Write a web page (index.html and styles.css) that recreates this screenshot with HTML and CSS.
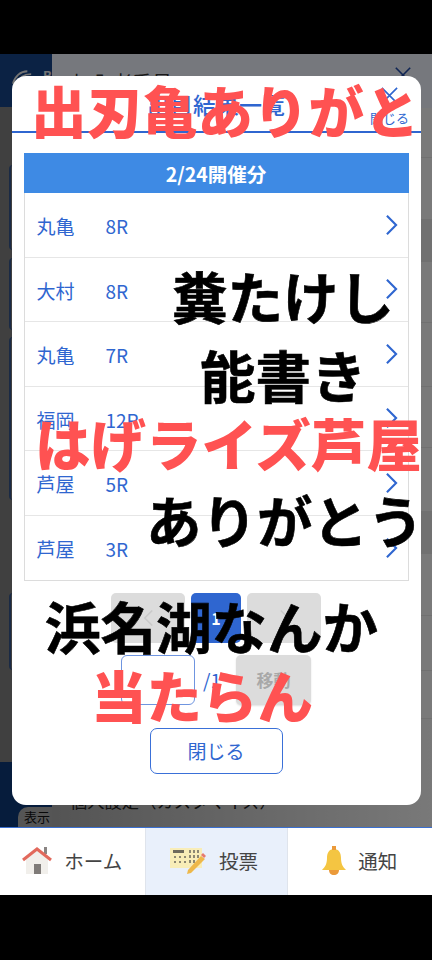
FILE: index.html
```html
<!DOCTYPE html>
<html lang="ja">
<head>
<meta charset="utf-8">
<title>出目結果一覧</title>
<link rel="stylesheet" href="styles.css">
</head>
<body>
<div class="screen">
  <div class="black-top"></div>
  <main class="app">
    <aside class="side">
      <div class="brand">
        <svg class="logo" viewBox="0 0 24 18"><path d="M1 16C3 8 9 3 16 3M5 17C7 10 12 6 20 6M9 18C11 12 16 9 23 9"/></svg>
        <span class="brand-name">B</span>
      </div>
      <div class="side-body">
        <span class="side-item i1"></span>
        <span class="side-item i2"></span>
        <span class="side-item i3"></span>
        <span class="side-item i4"></span>
      </div>
      <div class="side-navy"></div>
      <span class="show-tag">表示</span>
    </aside>
    <div class="content">
      <div class="member">加入者番号：05000412</div>
      <svg class="back-x" viewBox="0 0 20 20"><path d="M2 2 18 18M18 2 2 18"/></svg>
      <div class="row r50"></div>
      <div class="row r62"></div>
      <div class="row r42 dark"></div>
      <div class="row r61"></div>
      <div class="row r64"></div>
      <div class="row r61"></div>
      <div class="row r64"></div>
      <div class="row r42 dark"></div>
      <div class="row r62"></div>
      <div class="row r55"></div>
      <div class="row r48"></div>
      <div class="settings">個人設定（カスタマイズ）</div>
    </div>
    <div class="scrim"></div>
    <section class="modal">
      <header class="modal-head">
        <h1>出目結果一覧</h1>
        <div class="close-x">
          <svg viewBox="0 0 20 20"><path d="M2 2 18 18M18 2 2 18"/></svg>
          <span>閉じる</span>
        </div>
      </header>
      <div class="modal-body">
        <div class="date-bar">2/24開催分</div>
        <ul class="races">
          <li><span class="place">丸亀</span><span class="race">8R</span><svg viewBox="0 0 14 24"><path d="M2 2 12 12 2 22"/></svg></li>
          <li><span class="place">大村</span><span class="race">8R</span><svg viewBox="0 0 14 24"><path d="M2 2 12 12 2 22"/></svg></li>
          <li><span class="place">丸亀</span><span class="race">7R</span><svg viewBox="0 0 14 24"><path d="M2 2 12 12 2 22"/></svg></li>
          <li><span class="place">福岡</span><span class="race">12R</span><svg viewBox="0 0 14 24"><path d="M2 2 12 12 2 22"/></svg></li>
          <li><span class="place">芦屋</span><span class="race">5R</span><svg viewBox="0 0 14 24"><path d="M2 2 12 12 2 22"/></svg></li>
          <li><span class="place">芦屋</span><span class="race">3R</span><svg viewBox="0 0 14 24"><path d="M2 2 12 12 2 22"/></svg></li>
        </ul>
        <div class="pager">
          <span class="page-btn"><svg viewBox="0 0 14 24"><path d="M12 2 2 12 12 22"/></svg></span>
          <span class="page-cur">1</span>
          <span class="page-btn"><svg viewBox="0 0 14 24"><path d="M2 2 12 12 2 22"/></svg></span>
        </div>
        <div class="jump">
          <span class="jump-input"></span>
          <span class="jump-total">/1</span>
          <span class="jump-btn">移動</span>
        </div>
        <div class="close-wrap"><span class="close-btn">閉じる</span></div>
      </div>
    </section>
    <div class="caption c1 red">出刃亀ありがと</div>
    <div class="caption c2">糞たけし</div>
    <div class="caption c3">能書き</div>
    <div class="caption c4 red">はげライズ芦屋</div>
    <div class="caption c5">ありがとう</div>
    <div class="caption c6">浜名湖なんか</div>
    <div class="caption c7 red">当たらん</div>
  </main>
  <nav class="tabs">
    <div class="tab">
      <svg class="ic-home" viewBox="0 0 30 27"><path fill="#f1efeb" d="M4 12 15 3 26 12V27H4Z"/><path fill="#7f7b78" d="M12 17h7v10h-7z"/><path fill="#8a8583" d="M22 0h3v7h-3z"/><path class="roof" d="M1 13 15 2 29 13"/></svg>
      <span>ホーム</span>
    </div>
    <div class="tab active">
      <svg class="ic-vote" viewBox="0 0 37 27"><path fill="#f8edb8" d="M0 1h32v20H0z"/><path fill="#6e6a5c" d="M3 3h11v3H3z"/><path fill="#8d8873" d="M4 9h2v2H4zM9 9h2v2H9zM14 9h2v2h-2zM19 8h2v3h-2zM23 8h2v3h-2zM27 8h2v3h-2zM4 14h2v2H4zM9 14h2v2H9zM14 14h2v2h-2zM19 13h2v3h-2zM23 13h2v3h-2zM19 3h2v3h-2zM23 3h2v3h-2zM27 3h2v3h-2z"/><path fill="#eeb84a" d="M18 23 31 9l4 3-14 14-4 1z"/><path fill="#e77b6e" d="M33 6l3 3-2 2-3-3z"/></svg>
      <span>投票</span>
    </div>
    <div class="tab">
      <svg class="ic-bell" viewBox="0 0 24 29"><path fill="#f4c542" d="M12 3c5 0 7 4 7 9 0 6 2 9 5 12H0c3-3 5-6 5-12 0-5 2-9 7-9z"/><path fill="#eb9a3a" d="M10 0h4v4h-4zM7 24h10c0 3-2 5-5 5s-5-2-5-5z"/></svg>
      <span>通知</span>
    </div>
  </nav>
</div>
</body>
</html>
```
FILE: styles.css
```css
* { box-sizing: border-box; }
html, body { margin: 0; padding: 0; background: #000; }
body { font-family: "Noto Sans CJK JP", "Noto Sans", sans-serif; }
.screen { width: 432px; height: 960px; display: flex; flex-direction: column; background: #000; overflow: hidden; }
.black-top { height: 54px; flex: none; background: #000; }
.app { position: relative; height: 773px; flex: none; display: flex; background: #e9e9e9; overflow: hidden; }

.side { width: 52px; flex: none; display: flex; flex-direction: column; position: relative; background: #808080; }
.brand { height: 53px; flex: none; background: #164488; display: flex; align-items: flex-start; gap: 8px; padding: 14px 0 0 12px; overflow: hidden; }
.logo { width: 23px; height: 18px; flex: none; fill: none; stroke: #e8e8e8; stroke-width: 2; }
.brand-name { color: #e8e8e8; font-size: 13px; font-weight: 700; line-height: 16px; }
.side-body { flex: 1; display: flex; flex-direction: column; padding-top: 58px; }
.side-item { display: block; width: 12px; margin-left: 9px; border-left: 2px solid #34558a; border-radius: 4px 0 0 4px; }
.i1 { height: 85px; margin-bottom: 8px; }
.i2 { height: 72px; margin-bottom: 7px; }
.i3 { height: 163px; margin-bottom: 93px; }
.i4 { height: 77px; }
.side-navy { height: 65px; flex: none; background: #0c3878; }
.show-tag { position: absolute; left: 18px; bottom: 0; width: 34px; height: 20px; background: #aaa; padding-left: 6px; font-size: 13px; line-height: 20px; white-space: nowrap; border-radius: 10px 0 0 0; color: #111; overflow: hidden; }

.content { flex: 1; background: #fff; position: relative; display: flex; flex-direction: column; font-size: 20px; color: #333; }
.member { height: 54px; flex: none; background: #ecf0fa; padding: 14px 0 0 20px; line-height: 30px; white-space: nowrap; overflow: hidden; }
.back-x { position: absolute; right: 20px; top: 12px; width: 18px; height: 18px; fill: none; stroke: #1f4aa8; stroke-width: 1.8; }
.row { flex: none; background: #f5f5f5; border-bottom: 1px solid #e3e3e3; }
.row.dark { background: #e2e2e2; }
.r42 { height: 42px; }
.r48 { height: 48px; }
.r50 { height: 50px; }
.r55 { height: 55px; }
.r61 { height: 61px; }
.r62 { height: 62px; }
.r64 { height: 64px; }
.settings { flex: 1; display: flex; align-items: flex-end; padding: 0 0 13px 18px; font-size: 17.3px; line-height: 26px; background: linear-gradient(90deg, #a8a8a8, #f2f2f2); white-space: nowrap; color: #222; }
.scrim { position: absolute; inset: 0; background: rgba(0,0,0,.5); }

.modal { position: absolute; left: 11.5px; top: 22px; width: 409px; height: 729px; background: #fff; border-radius: 14px; display: flex; flex-direction: column; overflow: hidden; }
.modal-head { height: 57px; flex: none; border-bottom: 2px solid #2f66d0; display: flex; justify-content: center; align-items: center; position: relative; }
.modal-head h1 { margin: 0; font-size: 23px; line-height: 34px; font-weight: 500; color: #2f66d0; }
.close-x { position: absolute; right: 11px; top: 10px; width: 40px; display: flex; flex-direction: column; align-items: center; color: #2f66d0; font-size: 13px; line-height: 16px; }
.close-x svg { width: 19px; height: 19px; fill: none; stroke: #2f66d0; stroke-width: 1.7; margin-bottom: 5px; }
.modal-body { flex: 1; padding: 20px 12px 0; display: flex; flex-direction: column; }
.date-bar { height: 40px; flex: none; background: #3e8ae4; color: #fff; font-weight: 700; font-size: 19.5px; line-height: 42px; text-align: center; }
.races { list-style: none; margin: 0; padding: 0; flex: none; height: 388px; border: 1px solid #dcdcdc; border-top: none; }
.races li { height: 64.5px; display: flex; align-items: center; padding: 0 10px 0 12px; border-bottom: 1px solid #e6e6e6; color: #2f66d0; font-size: 19px; line-height: 24px; }
.races li:last-child { border-bottom: none; }
.place { width: 69px; padding-top: 3px; }
.race { flex: 1; padding-top: 3px; }
.races svg { width: 13px; height: 22px; fill: none; stroke: #2f66d0; stroke-width: 2.3; }

.pager { display: flex; justify-content: center; gap: 6px; margin-top: 12px; }
.page-btn { width: 74px; height: 49.5px; background: #dcdcdc; border-radius: 5px; display: flex; align-items: center; justify-content: center; }
.page-btn svg { width: 11px; height: 18px; fill: none; stroke: #c9c9c9; stroke-width: 2; }
.page-cur { width: 50px; height: 49.5px; background: #2f66d0; border-radius: 5px; color: #fff; font-weight: 700; font-size: 16px; display: flex; align-items: center; justify-content: center; }
.jump { display: flex; justify-content: center; align-items: center; margin-top: 12px; }
.jump-input { width: 74px; height: 50px; border: 1.5px solid #6f95e0; border-radius: 6px; background: #fff; }
.jump-total { width: 41px; padding-left: 8px; color: #2f66d0; font-size: 19px; }
.jump-btn { width: 75px; height: 50px; background: #dcdcdc; border-radius: 5px; color: #a8a8a8; font-weight: 700; font-size: 17px; display: flex; align-items: center; justify-content: center; box-shadow: 0 1px 2px rgba(0,0,0,.12); }
.close-wrap { display: flex; justify-content: center; margin-top: 23px; }
.close-btn { width: 133px; height: 46px; border: 1.5px solid #3a70d8; border-radius: 7px; color: #2f66d0; font-size: 19px; display: flex; align-items: center; justify-content: center; }

.caption { position: absolute; font-size: 55.5px; line-height: 64px; font-weight: 700; -webkit-text-stroke: .6px #000; white-space: nowrap; color: #000; }
.caption.red { color: #ff5252; font-weight: 900; -webkit-text-stroke: 0; }
.c1 { left: 31px; top: 23px; }
.c2 { left: 172px; top: 209px; }
.c3 { left: 200px; top: 288px; }
.c4 { left: 35px; top: 356px; }
.c5 { left: 146px; top: 433px; }
.c6 { left: 45px; top: 539px; }
.c7 { left: 91px; top: 608px; }

.tabs { height: 68px; flex: none; display: grid; grid-template-columns: 144.5px 143px 144.5px; background: #fff; border-top: 1.5px solid #3a6fd0; }
.tab { display: flex; align-items: center; justify-content: center; gap: 12px; padding-bottom: 3px; font-size: 19.5px; color: #444; }
.tab.active { background: #e9f0fb; border-left: 1px solid #dfe4ec; border-right: 1px solid #dfe4ec; padding-right: 4px; }
.ic-home { width: 30px; height: 27px; }
.ic-vote { width: 37px; height: 27px; }
.ic-bell { width: 24px; height: 29px; }
.roof { fill: none; stroke: #e2695c; stroke-width: 3; }
```
